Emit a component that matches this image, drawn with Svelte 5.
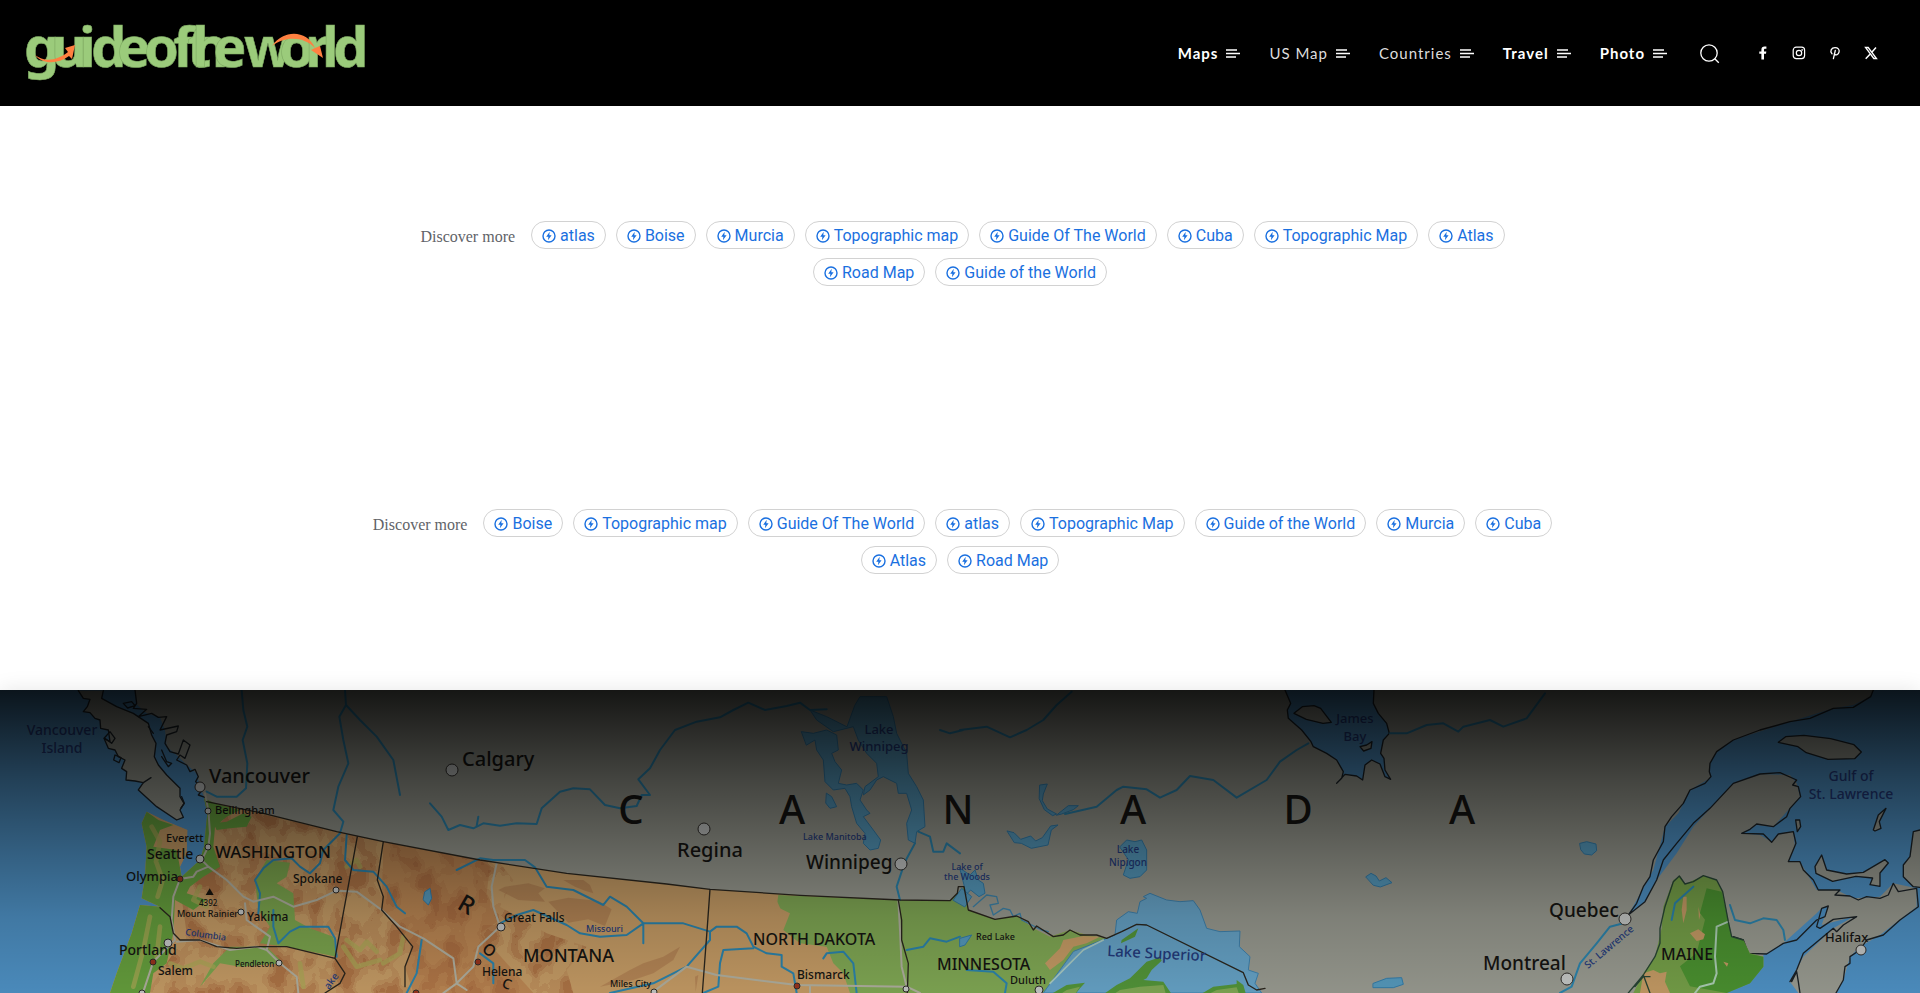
<script lang="ts">
  interface MapLabel {
    text: string;
    x: number;
    y: number;
    size: number;
    water?: boolean;
    anchor?: string;
    rotate?: number;
  }

  const menu = [
    { name: 'Maps', bold: true },
    { name: 'US Map', bold: false },
    { name: 'Countries', bold: false },
    { name: 'Travel', bold: true },
    { name: 'Photo', bold: true },
  ];

  const groups = [
    ['atlas', 'Boise', 'Murcia', 'Topographic map', 'Guide Of The World', 'Cuba', 'Topographic Map', 'Atlas', 'Road Map', 'Guide of the World'],
    ['Boise', 'Topographic map', 'Guide Of The World', 'atlas', 'Topographic Map', 'Guide of the World', 'Murcia', 'Cuba', 'Atlas', 'Road Map'],
  ];

  const labels: MapLabel[] = [
    { text: 'Vancouver', x: 62, y: 45, size: 14, water: true, anchor: 'middle' },
    { text: 'Island', x: 62, y: 63, size: 14, water: true, anchor: 'middle' },
    { text: 'Vancouver', x: 209, y: 93, size: 20 },
    { text: 'Calgary', x: 462, y: 76, size: 20 },
    { text: 'Bellingham', x: 215, y: 124, size: 11 },
    { text: 'Everett', x: 166, y: 152, size: 11 },
    { text: 'Seattle', x: 147, y: 169, size: 14 },
    { text: 'WASHINGTON', x: 215, y: 168, size: 17 },
    { text: 'Olympia', x: 126, y: 191, size: 13 },
    { text: 'Spokane', x: 293, y: 193, size: 12 },
    { text: '4392', x: 199, y: 216, size: 8 },
    { text: 'Mount Rainier', x: 177, y: 227, size: 9 },
    { text: 'Yakima', x: 247, y: 231, size: 12 },
    { text: 'Columbia', x: 185, y: 245, size: 9, water: true, rotate: 8 },
    { text: 'Portland', x: 119, y: 265, size: 14 },
    { text: 'Salem', x: 158, y: 285, size: 12 },
    { text: 'Pendleton', x: 235, y: 277, size: 8 },
    { text: 'ake', x: 329, y: 300, size: 10, water: true, rotate: -54 },
    { text: 'R', x: 456, y: 218, size: 24, rotate: 30 },
    { text: 'O', x: 481, y: 261, size: 16, rotate: 35 },
    { text: 'C', x: 501, y: 297, size: 14, rotate: 20 },
    { text: 'Great Falls', x: 504, y: 232, size: 12 },
    { text: 'Missouri', x: 586, y: 242, size: 9, water: true },
    { text: 'MONTANA', x: 523, y: 272, size: 18 },
    { text: 'Helena', x: 482, y: 286, size: 12 },
    { text: 'Miles City', x: 610, y: 297, size: 9 },
    { text: 'Regina', x: 677, y: 167, size: 20 },
    { text: 'NORTH DAKOTA', x: 753, y: 255, size: 16 },
    { text: 'Bismarck', x: 797, y: 289, size: 12 },
    { text: 'Lake', x: 879, y: 44, size: 13, water: true, anchor: 'middle' },
    { text: 'Winnipeg', x: 879, y: 61, size: 13, water: true, anchor: 'middle' },
    { text: 'Lake Manitoba', x: 803, y: 150, size: 9, water: true },
    { text: 'Winnipeg', x: 806, y: 179, size: 19 },
    { text: 'Lake of', x: 967, y: 180, size: 9, water: true, anchor: 'middle' },
    { text: 'the Woods', x: 967, y: 190, size: 9, water: true, anchor: 'middle' },
    { text: 'C', x: 631, y: 134, size: 40, anchor: 'middle' },
    { text: 'A', x: 792, y: 134, size: 40, anchor: 'middle' },
    { text: 'N', x: 958, y: 134, size: 40, anchor: 'middle' },
    { text: 'A', x: 1133, y: 134, size: 40, anchor: 'middle' },
    { text: 'D', x: 1298, y: 134, size: 40, anchor: 'middle' },
    { text: 'A', x: 1462, y: 134, size: 40, anchor: 'middle' },
    { text: 'Red Lake', x: 976, y: 250, size: 9 },
    { text: 'MINNESOTA', x: 937, y: 280, size: 16 },
    { text: 'Duluth', x: 1010, y: 294, size: 11 },
    { text: 'Lake', x: 1128, y: 163, size: 10, water: true, anchor: 'middle' },
    { text: 'Nipigon', x: 1128, y: 176, size: 10, water: true, anchor: 'middle' },
    { text: 'Lake Superior', x: 1107, y: 266, size: 15, water: true, rotate: 3 },
    { text: 'James', x: 1355, y: 33, size: 13, water: true, anchor: 'middle' },
    { text: 'Bay', x: 1355, y: 51, size: 13, water: true, anchor: 'middle' },
    { text: 'Quebec', x: 1549, y: 227, size: 19 },
    { text: 'Montreal', x: 1483, y: 280, size: 19 },
    { text: 'St. Lawrence', x: 1588, y: 279, size: 10, water: true, rotate: -40 },
    { text: 'MAINE', x: 1661, y: 270, size: 16 },
    { text: 'Gulf of', x: 1851, y: 91, size: 14, water: true, anchor: 'middle' },
    { text: 'St. Lawrence', x: 1851, y: 109, size: 14, water: true, anchor: 'middle' },
    { text: 'Halifax', x: 1825, y: 252, size: 13 },
  ];

  // cities: x, y, radius, state capital
  const cities: [number, number, number, boolean][] = [
    [200, 97, 5, false], [208, 121, 3, false], [208, 157, 3, false], [200, 169, 4, false],
    [180, 189, 3, true], [336, 200, 3, false], [241, 222, 3, false], [168, 253, 4, false],
    [153, 272, 3, true], [279, 273, 3, false], [142, 303, 3, false], [452, 80, 6, false],
    [501, 237, 4, false], [478, 272, 3, true], [416, 303, 3, true], [654, 302, 3, false],
    [704, 139, 6, false], [901, 174, 6, false], [797, 296, 3, true], [906, 299, 3, false],
    [1039, 300, 4, false], [1625, 229, 6, false], [1567, 289, 6, false], [1861, 260, 5, false],
  ];
</script>

<header>
  <a class="logo" href="#home" aria-label="guideoftheworld">
    <svg width="344" height="88" viewBox="0 0 344 88">
      <text class="wordmark" y="58" x="0 27 55 67 93 120 149 163 168 189 220 255 281 298 309">guideoftheworld</text>
      <path d="M11 46c10 8 23 5 33-3l-3-4 10-3-3 14-3-3c-11 8-26 9-34-1z" fill="#ff8040" />
      <path d="M248 37c12-17 35-16 43 2l5-2 3 12-12-8 4-2c-10-11-29-13-43-2z" fill="#ff8040" />
    </svg>
  </a>
  <div class="right">
    <nav>
      {#each menu as item}
        <a href="#{item.name}" class:bold={item.bold}>
          {item.name}
          <svg width="14" height="10" viewBox="0 0 14 10" stroke="#fff" stroke-width="1.4">
            <path d="M0 2h11M0 5.500h14M0 9h10" />
          </svg>
        </a>
      {/each}
    </nav>
    <button class="search" aria-label="Search">
      <svg width="20" height="20" viewBox="0 0 20 20" fill="none" stroke="#fff" stroke-width="1.3">
        <circle cx="9" cy="9" r="8.2" />
        <path d="M14.8 14.8l4 4" />
      </svg>
    </button>
    <div class="social">
      <a href="#facebook" aria-label="Facebook">
        <svg width="14" height="14" viewBox="0 0 14 14"><path d="M5.4 13.4V7.7H3.3V5.4h2.1V3.7C5.4 1.6 6.6.6 8.5.6h1.9v2.2H9.2c-.9 0-1.2.4-1.2 1.2v1.4h2.3L10 7.7H8v5.7z" fill="#fff" /></svg>
      </a>
      <a href="#instagram" aria-label="Instagram">
        <svg width="14" height="14" viewBox="0 0 14 14" fill="none" stroke="#fff" stroke-width="1.2">
          <rect x="1.2" y="1.2" width="11.4" height="11.4" rx="3" />
          <circle cx="7" cy="7" r="2.7" />
          <circle cx="10.2" cy="3.8" r=".3" />
        </svg>
      </a>
      <a href="#pinterest" aria-label="Pinterest">
        <svg width="14" height="14" viewBox="0 0 14 14" fill="none" stroke="#fff" stroke-width="1.3" stroke-linecap="round">
          <path d="M7.3 4.5L5.4 12.6M4 7.7C1.500 5 3.500 1.600 7 1.600c3 0 4.600 1.900 4.100 4.300-.5 2.600-3.400 4-4.800 2" />
        </svg>
      </a>
      <a href="#x" aria-label="X">
        <svg width="14" height="14" viewBox="0 0 14 14" fill="none" stroke="#fff">
          <path d="M1.500 1.500h2.700l8.300 11H9.800z" stroke-width="1.300" />
          <path d="M12 1.500L7.800 6.200M6 8.200l-4.300 4.600" stroke-width="1.500" />
        </svg>
      </a>
    </div>
  </div>
</header>

<main>
  {#each groups as chips}
    <section class="discover">
      <span class="heading">Discover more</span>
      {#each chips as chip}
        <a class="chip" href="#{chip}">
          <svg width="14" height="14" viewBox="0 0 14 14">
            <circle cx="7" cy="7" r="6" fill="none" stroke="#1a70e0" stroke-width="1.400" />
            <path d="M7.700 2.700L4.200 7.700h2.200l-.5 3.600 3.700-5H7.300z" fill="#1a70e0" />
          </svg>
          {chip}
        </a>
      {/each}
    </section>
  {/each}
</main>

<section class="hero">
  <svg viewBox="0 0 1920 303" preserveAspectRatio="xMidYMin slice">
    <defs>
      <linearGradient id="shade" x1="0" y1="0" x2="0" y2="1">
        <stop offset="0" stop-color="#000" stop-opacity=".87" />
        <stop offset=".3" stop-color="#000" stop-opacity=".59" />
        <stop offset=".55" stop-color="#000" stop-opacity=".39" />
        <stop offset=".75" stop-color="#000" stop-opacity=".24" />
        <stop offset="1" stop-color="#000" stop-opacity=".13" />
      </linearGradient>
      <filter id="relief" x="0" y="0" width="100%" height="100%" color-interpolation-filters="sRGB">
        <feTurbulence type="fractalNoise" baseFrequency=".015 .011" numOctaves="3" seed="8" />
        <feColorMatrix values="0 0 0 0 .7  0 0 0 0 .43  0 0 0 0 .25  1.8 0 0 0 -.4" />
        <feComponentTransfer><feFuncA type="discrete" tableValues="0 0 .2 .5 .75" /></feComponentTransfer>
      </filter>
      <clipPath id="west">
        <path d="M625 365L1010 455 1440 540 1500 548 1540 600 1500 680 1640 760 1760 800 1700 870 1720 939H440L560 760 540 620 640 540z" />
      </clipPath>
    </defs>

    <rect width="1920" height="303" fill="#a6a89d" />
    <g transform="scale(.33333) translate(0 -30)" stroke-linejoin="round" stroke-linecap="round">
      <!-- pacific -->
      <path fill="#559ed6" d="M0 30H405L412 75 440 100 480 112 495 150 500 200 530 225 555 250 590 280 600 320 612 350 622 400 620 440 612 500 600 540 565 575 545 590 540 560 560 520 562 450 490 420 440 395 425 430 440 500 435 590 425 655 480 680 420 675 395 760 350 880 330 939H0z" />
      <path class="coast" fill="#a6a89d" d="M235 32L250 55 270 58 262 80 250 95 270 98 285 115 300 120 302 145 325 150 330 185 312 175 325 205 345 210 355 230 375 240 365 265 380 275 378 300 405 303 430 308 415 330 470 380 530 420 550 412 540 390 552 370 540 350 540 325 500 285 475 255 463 230 468 190 455 165 445 130 400 100 350 80 305 55 310 32" />
      <path class="coast" fill="none" d="M405 30L410 70 400 85 440 88 415 110 455 100 475 112 500 110 480 150 535 138 530 155 500 165 495 190 510 215 535 222 550 180 570 195 555 235 540 225 530 240 560 255 570 275 585 268 595 290 587 305 610 325 595 345 615 352M370 70l25-5 10 12-22 7zM330 155l15 20-10 15-22-16zM345 225l18 8-6 15-16-8zM445 140l15 20M485 210l15 35 15 5-10 10-20-30M430 308l23-15M545 350l8 20-10 14" />

      <!-- united states -->
      <path fill="#d5a86d" d="M612 355L625 365 790 400 1010 455 1150 485 1440 540 1700 580 2000 612 2130 628 2400 646 2700 660 2850 662 2872 640 2892 620 2905 690 2985 718 3050 708 3100 745 3150 770 3210 750 3260 765 3320 775 3200 860 3130 939H330L350 880 395 760 420 675 480 680 425 655 435 590 440 500 425 430 440 395 490 420 562 450 560 520 540 560 545 590 600 540 612 500 622 400z" />
      <path fill="#c4844f" opacity=".6" d="M1150 485L1440 540 1470 560 1460 640 1500 720 1440 760 1520 850 1600 939H1240L1215 860 1238 800 1145 690z" />
      <g clip-path="url(#west)"><rect x="400" y="340" width="1560" height="610" filter="url(#relief)" /></g>
      <path fill="#6eac42" d="M612 355L650 372 720 390 680 410 645 440 640 500 660 560 610 590 570 620 560 640 620 660 580 690 525 660 520 760 500 850 460 880 450 939H330L350 880 395 760 420 675 480 680 425 655 435 590 440 500 425 430 440 395 475 420 520 435 480 450 460 500 530 510 545 590 600 540 612 500 622 400zM640 430L680 425 730 400 755 410 740 440 690 445 650 450z" />
      <path fill="#86b354" d="M765 600L800 540 870 548 860 590 830 610 880 640 885 720 930 745 1000 770 1010 830 860 800 780 790 810 740 775 690zM690 800L800 800 850 850 720 860 660 850 600 920 640 850z" />
      <path class="relief-line" d="M455 440l25 45-12 60M470 550l18 50-15 50M450 710l-20 100-30 110M480 740l-10 90M510 850l40 15 50-20 40 15M1040 780l40 30 20-25 30 30M1030 800l40 60 70-20M900 850l10 70M600 620l-20 40 40 20M1150 850l50-30 10-50M1040 560l30-20 10 20" />
      <path fill="#8bb65b" d="M2335 645L2700 660 2850 662 2872 640 2892 620 2905 690 2985 718 3050 708 3100 745 3150 770 3210 750 3260 765 3320 775 3200 860 3130 939H2550L2530 880 2500 850 2480 800 2400 790 2350 750 2370 700 2330 680z" />
      <path fill="#d5a86d" d="M2310 650l15 0 25 55-12 8zM3190 780L3250 768 3300 770 3260 790 3220 800 3190 840 3150 870 3135 850 3180 805z" />
      <path fill="#b98254" opacity=".6" d="M1690 600l60 0 20 15 10 25-25-8-30-12zM1645 665l60-12 90 10 40 25-20 50-50-20-60 10zM1515 620l70-10 50 15-20 15 20 25-80-5-60-30zM1930 850l60-20 50-30-20 40-60 40-60 20-100 20 90-50zM2085 890l10-5-8 50z" />

      <!-- lake superior -->
      <path fill="#6fb1d8" stroke="#428dbd" stroke-width="3" d="M3320 775L3345 765 3350 720 3385 695 3412 700 3420 665 3440 655 3430 650 3450 640 3500 660 3540 665 3580 662 3600 690 3620 745 3660 755 3720 753 3718 800 3750 830 3745 870 3775 880 3765 910 3785 939H3130L3180 870 3220 815z" />
      <path fill="#5aa23e" d="M3140 950L3200 915 3255 908 3240 925 3220 950M3300 950L3350 915 3390 895 3410 875 3440 845 3480 832 3485 842 3455 870 3440 895 3430 900 3490 905 3520 950M3590 950L3640 920 3710 912 3710 900 3730 915 3740 950" />
      <path fill="#8bb65b" d="M3170 950l30-20 40-10-20 30zM3330 950l30-20 60-10 70-5 10 35zM3610 950l40-20 60-8 10 28z" />
      <path fill="none" stroke="#b8ddd4" stroke-width="5" d="M3310 780L3250 810 3200 860 3150 910" />
      <path fill="#5aa23e" d="M3365 780l50-35-10 25-42 20z" />

      <!-- manitoba lakes -->
      <g fill="#5da7cd" stroke="#3687b8" stroke-width="3">
        <path d="M2565 75L2580 50 2660 50 2680 110 2690 160 2720 220 2725 280 2750 320 2770 360 2775 440 2750 455 2745 490 2725 480 2720 430 2735 390 2720 340 2695 340 2690 310 2650 290 2630 300 2610 330 2590 345 2595 320 2635 290 2630 250 2600 220 2575 180 2560 140 2500 155 2450 120 2430 90 2480 110 2540 140z" />
        <path d="M2405 155L2440 160 2480 150 2510 165 2515 210 2495 220 2505 245 2525 270 2515 310 2540 315 2570 310 2590 330 2580 360 2600 390 2610 400 2590 410 2620 450 2642 480 2635 505 2610 510 2590 490 2595 460 2570 430 2555 380 2550 350 2535 325 2500 330 2475 305 2470 240 2450 210 2445 180 2420 195z" />
        <path d="M2480 340l15 10 15 30-20 5-12-15z" />
        <path d="M2860 660L2885 625 2915 650 2895 680zM2880 565l30 20 15-15 10 30 15 10 5 30-18 10-25-20-15 15-5-30zM3120 315l22-3-12 30-3 20 15 25 28 15-12 5-25-18-15-32zM3170 405l35-28 30 0-15 12-35 13zM3022 453l20 5 20 20 30-10 15 15 20-10 25-35 22-3-20 15-10 45-50 10-30-15-20-2zM3360 500l20-20 25 5 20-5 15 30 0 60-20 20-30 5-20-10 15-45zM4098 590l15-10 15 8 10 15 20-10 18 15-35 13-20-5zM4120 910l40-15 45-2 5 20-30 10-60 0zM4740 490l20-5 28 7 2 20-15 13-22-3-10-12zM2880 775l35-10-20 30-15 5zM1275 635l15-10 5 30-10 20-15-15z" />
      </g>
      <path fill="none" stroke="#438fb8" stroke-width="4" d="M2920 680l40-35 30 5 5 20-25 5 10 30 30-20 20 5 10 20 20-10 5 20 60 30 20 5" />

      <!-- james bay -->
      <path class="coast" fill="#559ed6" d="M3855 30L3872 70 3862 90 3865 115 3905 150 3933 185 3940 200 3980 220 4010 240 4030 275 4025 295 4010 310 4035 283 4070 288 4088 300 4095 255 4115 240 4140 252 4155 290 4172 298 4155 270 4152 235 4142 220 4150 180 4168 160 4160 130 4135 100 4120 70 4122 30" />
      <path class="coast" fill="#a6a89d" d="M3882 100l25-20 35-3 20 8 32 42-25 3-50-12zM4080 200l20-5 16-10-3 20-22 8z" />

      <!-- gulf of st. lawrence -->
      <path fill="#559ed6" d="M5620 30L5610 50 5560 75 5500 85 5370 125 5200 180 5150 215 5130 250 5130 295 5070 330 5035 400 4995 440 4960 570 4885 705 4935 665 4970 600 5030 520 5080 440 5200 310 5280 282 5370 285 5390 310 5400 350 5320 440 5270 435 5225 460 5280 465 5315 485 5340 460 5380 455 5385 500 5365 545 5400 545 5450 630 5510 630 5560 655 5640 650 5680 610 5750 625 5750 680 5640 765 5580 800 5550 830 5530 900 5510 939H5760V30z" />
      <path fill="#559ed6" d="M5160 939L5250 890 5290 860 5290 825 5350 790 5450 700 5465 685 5485 678 5465 735 5560 710 5500 745 5410 830 5370 905 5395 939z" />
      <path class="coast" fill="none" d="M5620 30L5612 50 5560 82 5500 85 5430 115 5370 125 5280 150 5200 180 5150 215 5130 250 5128 275 5133 290 5115 310 5070 330 5050 370 5015 410 4995 440 4990 485 4960 540 4950 590 4930 620 4910 670 4885 705 4935 665 4970 600 4990 540 5030 490 5080 430 5130 385 5200 310 5280 282 5340 278 5390 300 5378 315 5395 320 5402 350 5370 385 5360 410 5320 440 5270 432 5250 448 5225 460 5290 462 5315 487 5335 462 5380 455 5388 490 5365 545 5400 545 5410 570 5440 600 5455 630 5520 630 5505 645 5550 648 5575 660 5600 650 5640 655 5665 645 5680 610 5695 635 5750 625 5755 680 5700 720 5650 765 5600 780 5580 810 5550 830 5550 850 5535 860 5530 900 5508 939M5370 905L5390 870 5410 820 5500 745 5510 755 5530 735 5570 710 5500 718 5460 745 5450 740 5465 685 5485 678 5475 710 5450 720 5390 780 5350 790 5300 822 5245 820 5230 780 5200 770M5375 905l15-30 5 30 5 34" />
      <path class="coast" fill="#a6a89d" d="M5335 187l22-17 55-4 80 10 70 18 22 22-20 20-80 2-65-20-25-18zM5445 560l20-35 15 45 60 12 50-5 65-38 10 10-25 30 0 40-30-5 8-20-50-5-70 15-50-24zM5620 450l15-45 23-20-20 40 5 20-18 8zM5387 420l12 0 3 20-10 15zM5760 450L5740 455 5730 530 5710 555 5710 590 5740 620 5760 622" />

      <!-- maine -->
      <path fill="#7fad4e" d="M4985 745L4990 680 5020 600 5040 588 5055 612 5110 587 5150 600 5170 640 5195 770 5230 780 5250 820 5290 830 5290 860 5250 910 5180 939H4900L4930 880 4965 830z" />
      <path fill="#519e34" d="M5120 625l45 10 30 135 35 10 20 42 40 8 0 30-40 50-70 29-110-20-30-60 50-40 25-100-15-20z" />
      <path fill="#d5a86d" d="M4930 880l30-10 20 10 20-5-5 30 15 34h-90zM5070 760l25-12 20 15-5 15-20 5zM5050 650l10 0 0 40-10 40-5-40zM5095 680l6 25-4 15zM5170 845l15 5-4 10z" />
      <path fill="none" stroke="#b9dec2" stroke-width="6" d="M5185 725L5150 740 5145 830 5150 880 5140 910 5100 920 5085 939" />
      <path fill="none" stroke="#2b4a39" stroke-width="4" d="M4885 939L4930 885 4965 830 4980 790 4980 745 4995 680 5020 605 5038 588 5055 612 5080 605 5110 587 5150 600 5168 635 5185 725 5195 770 5230 780M4930 885l20 54M4905 920l25-30 20 0" />

      <!-- rivers -->
      <g class="river">
        <path d="M725 30L730 90 742 140 728 180 742 250 738 325 710 350 650 350 620 335M1035 30L1038 75 1018 110 1030 180 1045 250 1015 320 1000 390 1030 425 1020 460 970 510 960 550 930 580 900 560 875 535 820 540 790 565 765 600 780 640 775 700M1038 75L1080 120 1130 170 1180 240 1200 345M1290 370L1325 410 1345 450 1380 435 1420 445 1450 430 1500 437 1550 430 1610 432 1625 385 1680 335 1720 325 1770 328 1815 375 1860 385 1910 378 1925 345 1950 345 1915 298 1950 265 1980 210 2025 150 2090 125 2160 112 2200 90 2245 68 2295 90 2360 78 2400 68 2430 90 2480 88" />
        <path d="M820 690L820 740 835 790 870 755 900 740 985 740 1005 775 1010 830M1040 465L1035 540 1060 570 1120 575 1160 620 1190 680 1215 700M1265 780L1250 880 1220 939M1370 570L1440 535 1480 540 1575 540 1605 562 1640 620 1720 630 1810 675 1830 650 1880 680 1930 730 2050 730 2130 755 2150 740 2210 740 2240 760 2260 800 2300 820 2345 825 2345 860 2380 880 2390 939M1930 730L1880 765 1800 770 1740 760 1700 735 1600 690 1550 705 1500 730M1930 730l0 60M1440 820L1480 850 1480 910M2130 755L2130 780 2060 860 1960 910 1830 939M2260 805L2170 810 2160 850 2155 920 2110 939M2470 835L2480 820 2530 815 2560 850 2570 939" />
        <path d="M2745 490L2715 545 2690 620 2700 660M2755 455L2790 470 2800 515 2830 515 2840 490 2880 520M2720 810L2770 800 2790 775 2840 785 2880 770M2880 150L2960 140 3030 172 3080 150 3130 120 3170 75 3215 35M2820 150L2850 160 2890 150M3195 402L3290 380 3350 330 3370 320 3440 328 3480 353 3530 330 3570 288 3640 300 3710 353 3800 300 3840 245 3890 210 3925 190M4170 160L4220 160 4280 135 4330 130 4375 155 4390 140 4470 120 4510 140 4580 115 4635 40M2900 870L2980 875 3020 910 3015 939" />
        <path d="M4680 939L4715 920 4740 850 4790 790 4830 740 4870 730M5015 720L5025 670 5080 620M5190 675L5205 720 5250 730 5290 715 5330 720 5350 750 5355 780M1435 410L1430 438" />
      </g>
      <!-- roads -->
      <g fill="none" stroke="#bebdac" stroke-width="6">
        <path d="M615 340L625 390 630 460 625 500 605 540 625 560 590 575 580 590 540 597 520 650 515 720 525 780 460 845 430 935M625 560L680 600 730 650 760 665 820 650 880 680 950 660 1010 632 1070 635 1145 690 1200 740 1270 775 1360 835 1370 910 1330 939M735 670L740 720 810 770 800 810 840 850 890 890 895 939M530 785L600 780 690 810 770 800 800 810M1370 910L1420 860 1435 800 1500 740 1480 680 1475 620 1490 550M1370 910L1400 930M1960 935L2060 860 2150 885 2390 915 2720 920 2760 939M2430 920v19M2695 660L2700 750 2705 860 2720 920" />
      </g>
      <!-- borders -->
      <g fill="none" stroke="#2e2920" stroke-width="4">
        <path d="M620 365L790 400 1010 455 1150 485 1440 540 1700 580 2000 612 2130 628 2400 646 2700 660 2850 662 2872 640 2875 620 2892 620 2905 690 2985 718 3050 708 3085 725 3100 750 3110 738 3160 770 3190 765 3210 750 3240 765 3290 765 3320 775 3365 755 3410 733 3440 735 3730 878 3745 915 3770 930 3795 925" />
        <path d="M1072 470L1005 835 860 800 780 800 710 805 650 800 600 780 540 780 520 760 510 710 480 683M1005 835L1035 880 1020 910 975 939M1150 485L1132 600 1150 650 1145 690 1190 740 1238 800 1215 860 1215 920M2130 628L2122 740 2107 939M2695 660L2705 720 2705 780 2725 850 2722 939" />
      </g>
      <path d="M617 645l12-20 12 20z" fill="#1b1710" />
    </g>

    {#each cities as [cx, cy, r, capital]}
      <circle {cx} {cy} {r} fill={capital ? '#a5381f' : '#d5d8d6'} stroke="#33302d" />
    {/each}
    {#each labels as l}
      <text
        class="label"
        class:water={l.water}
        x={l.x}
        y={l.y}
        font-size={l.size}
        text-anchor={l.anchor ?? 'start'}
        transform={l.rotate ? `rotate(${l.rotate} ${l.x} ${l.y})` : undefined}>{l.text}</text>
    {/each}
    <rect width="1920" height="303" fill="url(#shade)" />
  </svg>
</section>

<style>
  :global(body) {
    margin: 0;
    background: #fff;
    overflow-x: hidden;
  }

  header {
    display: flex;
    justify-content: space-between;
    align-items: center;
    height: 106px;
    padding: 0 42px 0 24px;
    background: #000;
  }

  a {
    text-decoration: none;
  }

  svg {
    display: block;
    flex-shrink: 0;
  }

  .wordmark {
    font: bold 56px 'Noto Sans', sans-serif;
    fill: #9bcb7b;
    stroke: #7fab63;
    stroke-width: 0.6px;
  }

  .right,
  nav,
  nav a,
  .social {
    display: flex;
    align-items: center;
  }

  nav {
    gap: 29px;
  }

  nav a {
    gap: 8px;
    color: #ddd;
    font: 15px/20px Lato, sans-serif;
    letter-spacing: 1px;
  }

  nav a.bold {
    color: #fff;
    font-weight: 700;
  }

  .search {
    margin: 2px 36px 0 33px;
    padding: 0;
    border: 0;
    background: none;
    cursor: pointer;
  }

  .social {
    gap: 22px;
  }

  main {
    display: flex;
    flex-direction: column;
    gap: 223px;
    padding: 115px 0 116px;
  }

  .discover {
    display: flex;
    flex-wrap: wrap;
    justify-content: center;
    align-items: center;
    row-gap: 9px;
    width: 100%;
    max-width: 1208px;
    margin: 0 auto;
  }

  .heading {
    margin: 4px 11px 0 10px;
    color: #5f6368;
    font: 16px/20px 'Liberation Serif', serif;
  }

  .chip {
    display: flex;
    align-items: center;
    gap: 4px;
    box-sizing: border-box;
    height: 28px;
    margin: 0 5px;
    padding: 1px 10px 0;
    border: 1px solid #d2d2d2;
    border-radius: 14px;
    color: #1a70e0;
    font: 16px/20px Roboto, sans-serif;
    white-space: nowrap;
  }

  .hero {
    box-shadow: 0 0 20px rgba(0, 0, 0, 0.1);
  }

  .hero svg {
    width: 100%;
    height: auto;
  }

  .coast {
    stroke: #1d2429;
    stroke-width: 4px;
  }

  .river {
    fill: none;
    stroke: #2f8fbb;
    stroke-width: 6px;
  }

  .relief-line {
    fill: none;
    stroke: #b9b75c;
    stroke-width: 14px;
    opacity: 0.7;
  }

  .label {
    font-family: 'Noto Sans', sans-serif;
    font-weight: 500;
    fill: #171613;
  }

  .label.water {
    fill: #263f86;
  }
</style>
